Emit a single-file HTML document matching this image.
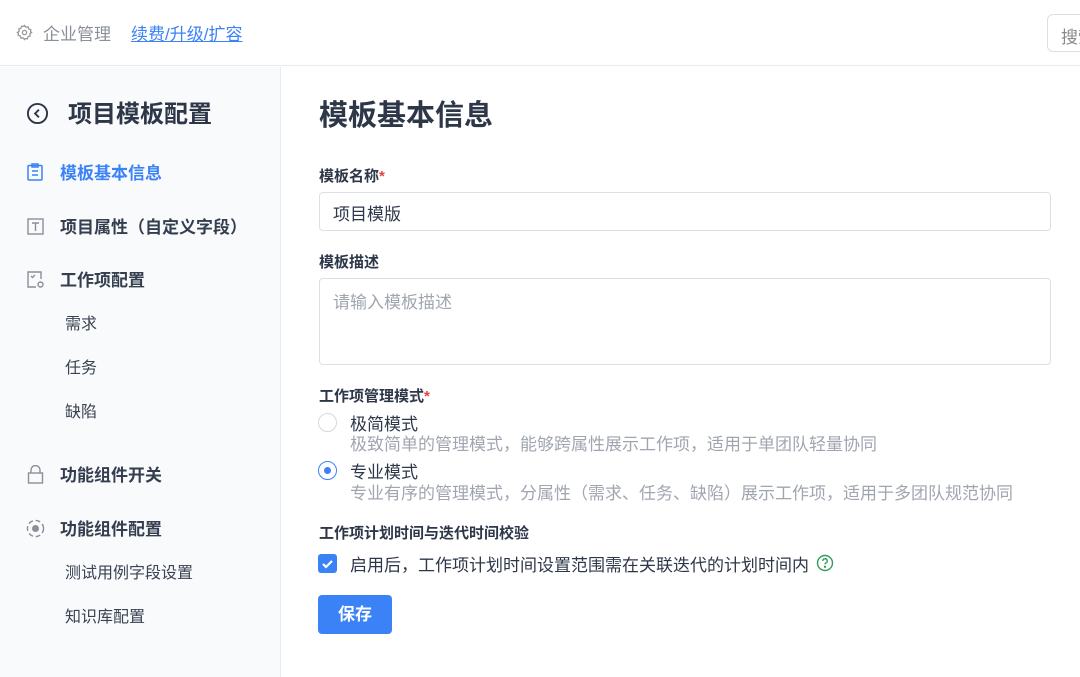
<!DOCTYPE html>
<html><head><meta charset="utf-8"><style>
*{box-sizing:border-box;margin:0;padding:0}
body{width:1080px;height:677px;overflow:hidden;background:#fff;font-family:"Liberation Sans","Noto Sans CJK SC",sans-serif;color:#2d3748;position:relative}
.top{position:absolute;left:0;top:0;width:1080px;height:66px;border-bottom:1px solid #e6ebf2;background:#fff}
.side{position:absolute;left:0;top:67px;width:281px;height:610px;background:#f9fafb;border-right:1px solid #e8ebef}
.abs{position:absolute;white-space:nowrap}
.nav{font-size:17px;font-weight:bold;color:#343e4f}
.sub{font-size:16px;color:#3a4353}
.lbl{font-size:15px;font-weight:bold;color:#2d3748}
.inp{position:absolute;border:1px solid #dcdfe4;border-radius:4px;background:#fff}
</style></head><body>
<div class="top">
<svg class="abs" style="left:16px;top:24px" width="17" height="17" viewBox="0 0 24 24" fill="none" stroke="#999" stroke-width="1.8"><circle cx="12" cy="12" r="3"/><path d="M12 2l2 2.5 3-.5 1 3 3 1-.5 3L22 12l-2.5 2 .5 3-3 1-1 3-3-.5L12 22l-2-2.5-3 .5-1-3-3-1 .5-3L2 12l2.5-2L4 7l3-1 1-3 3 .5z"/></svg>
<div class="abs" style="left:43px;top:20px;font-size:17px;color:#8a8f98">企业管理</div>
<div class="abs" style="left:131px;top:20px;font-size:17px;color:#3b82f6;text-decoration:underline">续费/升级/扩容</div>
<div class="abs" style="left:1047px;top:14px;width:60px;height:38px;border:1px solid #dcdfe4;border-radius:6px;padding:8px 0 0 13px;font-size:17px;color:#888">搜索</div>
</div>
<div class="side">
<svg class="abs" style="left:26px;top:35px" width="23" height="23" viewBox="0 0 24 24" fill="none" stroke="#2d3748" stroke-width="2"><circle cx="12" cy="12" r="10"/><path d="M13.5 8l-4 4 4 4"/></svg>
<div class="abs" style="left:68px;top:27px;font-size:24px;font-weight:bold;color:#2d3748">项目模板配置</div>
<svg class="abs" style="left:27px;top:96px" width="16" height="18" viewBox="0 0 16 18" fill="none" stroke="#3b82f6" stroke-width="1.5"><rect x="1" y="2.5" width="14" height="14.5" rx="1"/><rect x="5" y="1" width="6" height="3"/><path d="M5 8h6M5 12h6"/></svg>
<div class="abs nav" style="left:60px;top:92px;color:#3b82f6">模板基本信息</div>
<svg class="abs" style="left:27px;top:151px" width="17" height="17" viewBox="0 0 17 17" fill="none" stroke="#8a8f98" stroke-width="1.4"><rect x="1" y="1" width="15" height="15"/><path d="M5 5h7M8.5 5v8"/></svg>
<div class="abs nav" style="left:60px;top:146px">项目属性（自定义字段）</div>
<svg class="abs" style="left:27px;top:204px" width="18" height="18" viewBox="0 0 18 18" fill="none" stroke="#8a8f98" stroke-width="1.4"><path d="M9 16H1V1h13v7"/><path d="M4 5l1.5 1.5L8 4"/><circle cx="13.5" cy="13.5" r="2.5"/></svg>
<div class="abs nav" style="left:60px;top:199px">工作项配置</div>
<div class="abs sub" style="left:65px;top:243px">需求</div>
<div class="abs sub" style="left:65px;top:287px">任务</div>
<div class="abs sub" style="left:65px;top:331px">缺陷</div>
<svg class="abs" style="left:27px;top:398px" width="17" height="19" viewBox="0 0 17 19" fill="none" stroke="#8a8f98" stroke-width="1.4"><rect x="1.5" y="8" width="14" height="10"/><path d="M4 8V5a4.5 4.5 0 0 1 9 0v3"/></svg>
<div class="abs nav" style="left:60px;top:394px">功能组件开关</div>
<svg class="abs" style="left:26px;top:452px" width="19" height="19" viewBox="0 0 20 20" fill="none" stroke="#8a8f98" stroke-width="1.5" stroke-dasharray="5 3"><circle cx="10" cy="10" r="8.5"/></svg>
<div class="abs" style="left:32px;top:458px;width:7px;height:7px;border-radius:50%;background:#8a8f98"></div>
<div class="abs nav" style="left:60px;top:448px">功能组件配置</div>
<div class="abs sub" style="left:65px;top:492px">测试用例字段设置</div>
<div class="abs sub" style="left:65px;top:536px">知识库配置</div>
</div>
<div class="abs" style="left:319px;top:92px;font-size:29px;font-weight:bold;color:#2d3748">模板基本信息</div>
<div class="abs lbl" style="left:319px;top:165px">模板名称<span style="color:#e53e3e">*</span></div>
<div class="inp" style="left:319px;top:192px;width:732px;height:39px"></div>
<div class="abs" style="left:333px;top:200px;font-size:17px;color:#2d3748">项目模版</div>
<div class="abs lbl" style="left:319px;top:251px">模板描述</div>
<div class="inp" style="left:319px;top:278px;width:732px;height:87px"></div>
<div class="abs" style="left:333px;top:288px;font-size:17px;color:#a0a6b0">请输入模板描述</div>
<div class="abs lbl" style="left:319px;top:385px">工作项管理模式<span style="color:#e53e3e">*</span></div>
<div class="abs" style="left:318px;top:413px;width:19px;height:19px;border:1px solid #d5d8dd;border-radius:50%"></div>
<div class="abs" style="left:350px;top:410px;font-size:17px;color:#2d3748">极简模式</div>
<div class="abs" style="left:350px;top:430px;font-size:17px;color:#a0a6b0">极致简单的管理模式，能够跨属性展示工作项，适用于单团队轻量协同</div>
<div class="abs" style="left:318px;top:461px;width:19px;height:19px;border:1px solid #3b82f6;border-radius:50%"></div>
<div class="abs" style="left:324px;top:467px;width:7px;height:7px;background:#3b82f6;border-radius:50%"></div>
<div class="abs" style="left:350px;top:458px;font-size:17px;color:#2d3748">专业模式</div>
<div class="abs" style="left:350px;top:479px;font-size:17px;color:#a0a6b0">专业有序的管理模式，分属性（需求、任务、缺陷）展示工作项，适用于多团队规范协同</div>
<div class="abs lbl" style="left:319px;top:522px">工作项计划时间与迭代时间校验</div>
<div class="abs" style="left:318px;top:554px;width:19px;height:19px;background:#3b82f6;border-radius:3px"></div>
<svg class="abs" style="left:318px;top:554px" width="19" height="19" viewBox="0 0 19 19" fill="none" stroke="#fff" stroke-width="2.2"><path d="M5 10l3 3 6-6"/></svg>
<div class="abs" style="left:350px;top:551px;font-size:17px;color:#2d3748">启用后，工作项计划时间设置范围需在关联迭代的计划时间内</div>
<svg class="abs" style="left:816px;top:554px" width="18" height="18" viewBox="0 0 18 18" fill="none" stroke="#2f9e5a" stroke-width="1.4"><circle cx="9" cy="9" r="7.5"/><path d="M6.8 7a2.2 2.2 0 1 1 3 2c-.6.3-.8.7-.8 1.4"/><circle cx="9" cy="12.8" r=".5" fill="#2f9e5a"/></svg>
<div class="abs" style="left:318px;top:595px;width:74px;height:39px;background:#3b82f6;border-radius:4px;color:#fff;font-size:17px;font-weight:bold;text-align:center;line-height:39px">保存</div>
</body></html>
